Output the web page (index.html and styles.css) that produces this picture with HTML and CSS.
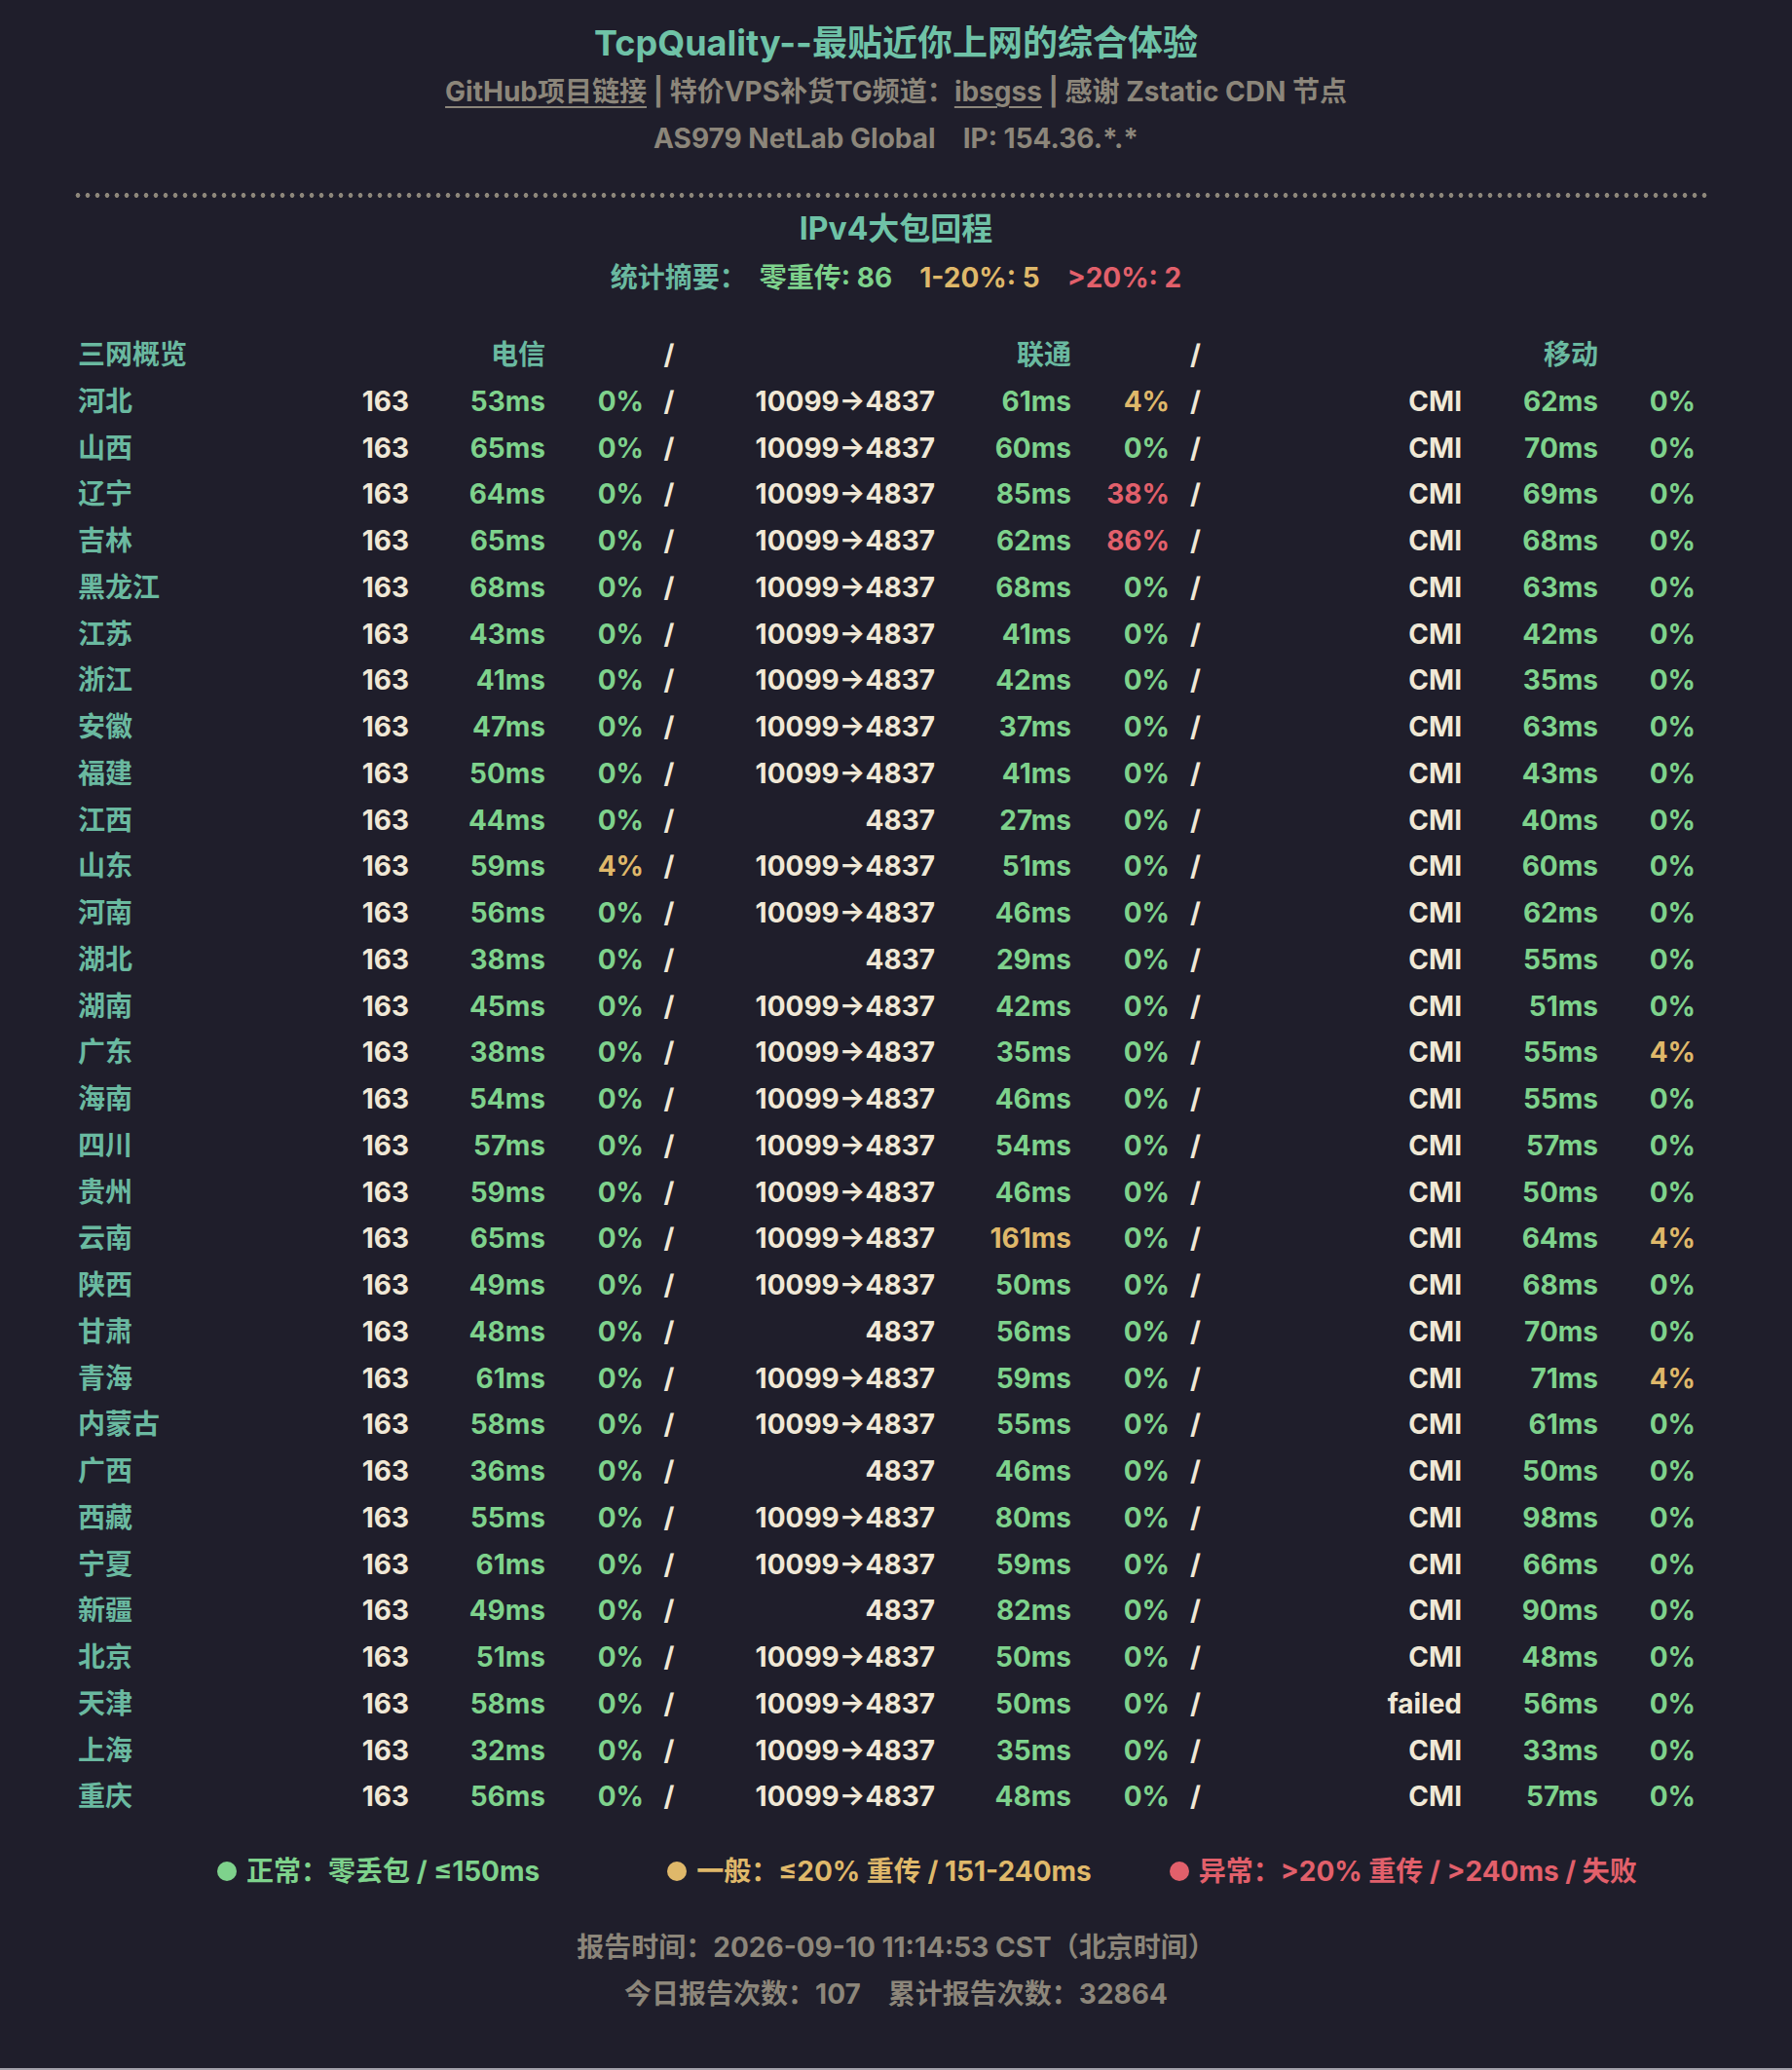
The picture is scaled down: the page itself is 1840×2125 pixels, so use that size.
FILE: index.html
```html
<!DOCTYPE html>
<html lang="zh-CN">
<head>
<meta charset="utf-8">
<title>TcpQuality</title>
<link rel="stylesheet" href="styles.css">
</head>
<body>
<div class="page">
  <header class="head">
    <h1 class="title">TcpQuality--最贴近你上网的综合体验</h1>
    <div class="links"><a class="link" href="#">GitHub项目链接</a> | 特价VPS补货TG频道：<a class="link" href="#">ibsgss</a> | 感谢 Zstatic CDN 节点</div>
    <div class="meta"><span>AS979 NetLab Global</span><span class="meta-ip">IP: 154.36.*.*</span></div>
  </header>

  <div class="divider"></div>

  <h2 class="section-title">IPv4大包回程</h2>
  <div class="stats">
    <span class="stat-label">统计摘要：</span>
    <span class="stat ok">零重传: 86</span>
    <span class="stat warn">1-20%: 5</span>
    <span class="stat bad">&gt;20%: 2</span>
  </div>

  <div class="grid">
    <div class="row head-row"><span class="name">三网概览</span><span></span><span class="r th">电信</span><span></span><span class="sep">/</span><span></span><span class="r th">联通</span><span></span><span class="sep">/</span><span></span><span class="r th">移动</span><span></span></div>

    <div class="row"><span class="name">河北</span><span class="r asn">163</span><span class="r ok">53ms</span><span class="r ok">0%</span><span class="sep">/</span><span class="r asn">10099→4837</span><span class="r ok">61ms</span><span class="r warn">4%</span><span class="sep">/</span><span class="r asn">CMI</span><span class="r ok">62ms</span><span class="r ok">0%</span></div>
    <div class="row"><span class="name">山西</span><span class="r asn">163</span><span class="r ok">65ms</span><span class="r ok">0%</span><span class="sep">/</span><span class="r asn">10099→4837</span><span class="r ok">60ms</span><span class="r ok">0%</span><span class="sep">/</span><span class="r asn">CMI</span><span class="r ok">70ms</span><span class="r ok">0%</span></div>
    <div class="row"><span class="name">辽宁</span><span class="r asn">163</span><span class="r ok">64ms</span><span class="r ok">0%</span><span class="sep">/</span><span class="r asn">10099→4837</span><span class="r ok">85ms</span><span class="r bad">38%</span><span class="sep">/</span><span class="r asn">CMI</span><span class="r ok">69ms</span><span class="r ok">0%</span></div>
    <div class="row"><span class="name">吉林</span><span class="r asn">163</span><span class="r ok">65ms</span><span class="r ok">0%</span><span class="sep">/</span><span class="r asn">10099→4837</span><span class="r ok">62ms</span><span class="r bad">86%</span><span class="sep">/</span><span class="r asn">CMI</span><span class="r ok">68ms</span><span class="r ok">0%</span></div>
    <div class="row"><span class="name">黑龙江</span><span class="r asn">163</span><span class="r ok">68ms</span><span class="r ok">0%</span><span class="sep">/</span><span class="r asn">10099→4837</span><span class="r ok">68ms</span><span class="r ok">0%</span><span class="sep">/</span><span class="r asn">CMI</span><span class="r ok">63ms</span><span class="r ok">0%</span></div>
    <div class="row"><span class="name">江苏</span><span class="r asn">163</span><span class="r ok">43ms</span><span class="r ok">0%</span><span class="sep">/</span><span class="r asn">10099→4837</span><span class="r ok">41ms</span><span class="r ok">0%</span><span class="sep">/</span><span class="r asn">CMI</span><span class="r ok">42ms</span><span class="r ok">0%</span></div>
    <div class="row"><span class="name">浙江</span><span class="r asn">163</span><span class="r ok">41ms</span><span class="r ok">0%</span><span class="sep">/</span><span class="r asn">10099→4837</span><span class="r ok">42ms</span><span class="r ok">0%</span><span class="sep">/</span><span class="r asn">CMI</span><span class="r ok">35ms</span><span class="r ok">0%</span></div>
    <div class="row"><span class="name">安徽</span><span class="r asn">163</span><span class="r ok">47ms</span><span class="r ok">0%</span><span class="sep">/</span><span class="r asn">10099→4837</span><span class="r ok">37ms</span><span class="r ok">0%</span><span class="sep">/</span><span class="r asn">CMI</span><span class="r ok">63ms</span><span class="r ok">0%</span></div>
    <div class="row"><span class="name">福建</span><span class="r asn">163</span><span class="r ok">50ms</span><span class="r ok">0%</span><span class="sep">/</span><span class="r asn">10099→4837</span><span class="r ok">41ms</span><span class="r ok">0%</span><span class="sep">/</span><span class="r asn">CMI</span><span class="r ok">43ms</span><span class="r ok">0%</span></div>
    <div class="row"><span class="name">江西</span><span class="r asn">163</span><span class="r ok">44ms</span><span class="r ok">0%</span><span class="sep">/</span><span class="r asn">4837</span><span class="r ok">27ms</span><span class="r ok">0%</span><span class="sep">/</span><span class="r asn">CMI</span><span class="r ok">40ms</span><span class="r ok">0%</span></div>
    <div class="row"><span class="name">山东</span><span class="r asn">163</span><span class="r ok">59ms</span><span class="r warn">4%</span><span class="sep">/</span><span class="r asn">10099→4837</span><span class="r ok">51ms</span><span class="r ok">0%</span><span class="sep">/</span><span class="r asn">CMI</span><span class="r ok">60ms</span><span class="r ok">0%</span></div>
    <div class="row"><span class="name">河南</span><span class="r asn">163</span><span class="r ok">56ms</span><span class="r ok">0%</span><span class="sep">/</span><span class="r asn">10099→4837</span><span class="r ok">46ms</span><span class="r ok">0%</span><span class="sep">/</span><span class="r asn">CMI</span><span class="r ok">62ms</span><span class="r ok">0%</span></div>
    <div class="row"><span class="name">湖北</span><span class="r asn">163</span><span class="r ok">38ms</span><span class="r ok">0%</span><span class="sep">/</span><span class="r asn">4837</span><span class="r ok">29ms</span><span class="r ok">0%</span><span class="sep">/</span><span class="r asn">CMI</span><span class="r ok">55ms</span><span class="r ok">0%</span></div>
    <div class="row"><span class="name">湖南</span><span class="r asn">163</span><span class="r ok">45ms</span><span class="r ok">0%</span><span class="sep">/</span><span class="r asn">10099→4837</span><span class="r ok">42ms</span><span class="r ok">0%</span><span class="sep">/</span><span class="r asn">CMI</span><span class="r ok">51ms</span><span class="r ok">0%</span></div>
    <div class="row"><span class="name">广东</span><span class="r asn">163</span><span class="r ok">38ms</span><span class="r ok">0%</span><span class="sep">/</span><span class="r asn">10099→4837</span><span class="r ok">35ms</span><span class="r ok">0%</span><span class="sep">/</span><span class="r asn">CMI</span><span class="r ok">55ms</span><span class="r warn">4%</span></div>
    <div class="row"><span class="name">海南</span><span class="r asn">163</span><span class="r ok">54ms</span><span class="r ok">0%</span><span class="sep">/</span><span class="r asn">10099→4837</span><span class="r ok">46ms</span><span class="r ok">0%</span><span class="sep">/</span><span class="r asn">CMI</span><span class="r ok">55ms</span><span class="r ok">0%</span></div>
    <div class="row"><span class="name">四川</span><span class="r asn">163</span><span class="r ok">57ms</span><span class="r ok">0%</span><span class="sep">/</span><span class="r asn">10099→4837</span><span class="r ok">54ms</span><span class="r ok">0%</span><span class="sep">/</span><span class="r asn">CMI</span><span class="r ok">57ms</span><span class="r ok">0%</span></div>
    <div class="row"><span class="name">贵州</span><span class="r asn">163</span><span class="r ok">59ms</span><span class="r ok">0%</span><span class="sep">/</span><span class="r asn">10099→4837</span><span class="r ok">46ms</span><span class="r ok">0%</span><span class="sep">/</span><span class="r asn">CMI</span><span class="r ok">50ms</span><span class="r ok">0%</span></div>
    <div class="row"><span class="name">云南</span><span class="r asn">163</span><span class="r ok">65ms</span><span class="r ok">0%</span><span class="sep">/</span><span class="r asn">10099→4837</span><span class="r warn">161ms</span><span class="r ok">0%</span><span class="sep">/</span><span class="r asn">CMI</span><span class="r ok">64ms</span><span class="r warn">4%</span></div>
    <div class="row"><span class="name">陕西</span><span class="r asn">163</span><span class="r ok">49ms</span><span class="r ok">0%</span><span class="sep">/</span><span class="r asn">10099→4837</span><span class="r ok">50ms</span><span class="r ok">0%</span><span class="sep">/</span><span class="r asn">CMI</span><span class="r ok">68ms</span><span class="r ok">0%</span></div>
    <div class="row"><span class="name">甘肃</span><span class="r asn">163</span><span class="r ok">48ms</span><span class="r ok">0%</span><span class="sep">/</span><span class="r asn">4837</span><span class="r ok">56ms</span><span class="r ok">0%</span><span class="sep">/</span><span class="r asn">CMI</span><span class="r ok">70ms</span><span class="r ok">0%</span></div>
    <div class="row"><span class="name">青海</span><span class="r asn">163</span><span class="r ok">61ms</span><span class="r ok">0%</span><span class="sep">/</span><span class="r asn">10099→4837</span><span class="r ok">59ms</span><span class="r ok">0%</span><span class="sep">/</span><span class="r asn">CMI</span><span class="r ok">71ms</span><span class="r warn">4%</span></div>
    <div class="row"><span class="name">内蒙古</span><span class="r asn">163</span><span class="r ok">58ms</span><span class="r ok">0%</span><span class="sep">/</span><span class="r asn">10099→4837</span><span class="r ok">55ms</span><span class="r ok">0%</span><span class="sep">/</span><span class="r asn">CMI</span><span class="r ok">61ms</span><span class="r ok">0%</span></div>
    <div class="row"><span class="name">广西</span><span class="r asn">163</span><span class="r ok">36ms</span><span class="r ok">0%</span><span class="sep">/</span><span class="r asn">4837</span><span class="r ok">46ms</span><span class="r ok">0%</span><span class="sep">/</span><span class="r asn">CMI</span><span class="r ok">50ms</span><span class="r ok">0%</span></div>
    <div class="row"><span class="name">西藏</span><span class="r asn">163</span><span class="r ok">55ms</span><span class="r ok">0%</span><span class="sep">/</span><span class="r asn">10099→4837</span><span class="r ok">80ms</span><span class="r ok">0%</span><span class="sep">/</span><span class="r asn">CMI</span><span class="r ok">98ms</span><span class="r ok">0%</span></div>
    <div class="row"><span class="name">宁夏</span><span class="r asn">163</span><span class="r ok">61ms</span><span class="r ok">0%</span><span class="sep">/</span><span class="r asn">10099→4837</span><span class="r ok">59ms</span><span class="r ok">0%</span><span class="sep">/</span><span class="r asn">CMI</span><span class="r ok">66ms</span><span class="r ok">0%</span></div>
    <div class="row"><span class="name">新疆</span><span class="r asn">163</span><span class="r ok">49ms</span><span class="r ok">0%</span><span class="sep">/</span><span class="r asn">4837</span><span class="r ok">82ms</span><span class="r ok">0%</span><span class="sep">/</span><span class="r asn">CMI</span><span class="r ok">90ms</span><span class="r ok">0%</span></div>
    <div class="row"><span class="name">北京</span><span class="r asn">163</span><span class="r ok">51ms</span><span class="r ok">0%</span><span class="sep">/</span><span class="r asn">10099→4837</span><span class="r ok">50ms</span><span class="r ok">0%</span><span class="sep">/</span><span class="r asn">CMI</span><span class="r ok">48ms</span><span class="r ok">0%</span></div>
    <div class="row"><span class="name">天津</span><span class="r asn">163</span><span class="r ok">58ms</span><span class="r ok">0%</span><span class="sep">/</span><span class="r asn">10099→4837</span><span class="r ok">50ms</span><span class="r ok">0%</span><span class="sep">/</span><span class="r asn">failed</span><span class="r ok">56ms</span><span class="r ok">0%</span></div>
    <div class="row"><span class="name">上海</span><span class="r asn">163</span><span class="r ok">32ms</span><span class="r ok">0%</span><span class="sep">/</span><span class="r asn">10099→4837</span><span class="r ok">35ms</span><span class="r ok">0%</span><span class="sep">/</span><span class="r asn">CMI</span><span class="r ok">33ms</span><span class="r ok">0%</span></div>
    <div class="row"><span class="name">重庆</span><span class="r asn">163</span><span class="r ok">56ms</span><span class="r ok">0%</span><span class="sep">/</span><span class="r asn">10099→4837</span><span class="r ok">48ms</span><span class="r ok">0%</span><span class="sep">/</span><span class="r asn">CMI</span><span class="r ok">57ms</span><span class="r ok">0%</span></div>
  </div>

  <div class="legend">
    <span class="legend-item legend-ok"><span class="dot"></span>正常：零丢包 / ≤150ms</span>
    <span class="legend-item legend-warn"><span class="dot"></span>一般：≤20% 重传 / 151-240ms</span>
    <span class="legend-item legend-bad"><span class="dot"></span>异常：&gt;20% 重传 / &gt;240ms / 失败</span>
  </div>

  <footer class="foot">
    <div class="foot-line">报告时间：2026-09-10 11:14:53 CST（北京时间）</div>
    <div class="foot-line"><span>今日报告次数：107</span><span class="foot-total">累计报告次数：32864</span></div>
  </footer>
</div>
</body>
</html>
```

FILE: styles.css
```css
html, body {
  margin: 0;
  padding: 0;
  background: #1f1e2b;
}

body {
  font-family: "Inter", "Noto Sans CJK SC", sans-serif;
  font-weight: 700;
  color: #f0e8d6;
}

.page {
  padding: 18px 80px 52px;
  border-bottom: 2px solid #a2a1aa;
}

.head {
  text-align: center;
}

.title {
  margin: 0;
  font-size: 36px;
  line-height: 52px;
  font-weight: 700;
  color: #6fc2a7;
}

.links,
.meta {
  font-size: 28px;
  line-height: 48px;
  color: #8c867a;
}

.link {
  color: #8c867a;
  text-decoration: underline;
  text-decoration-thickness: 2px;
  text-underline-offset: 5px;
}

.meta-ip {
  margin-left: 28px;
}

.divider {
  margin: 32px 3px 0 -5px;
  height: 5px;
  background-image: radial-gradient(circle at center, #8c867a 2.1px, transparent 2.7px);
  background-size: 10px 5px;
  background-repeat: repeat-x;
}

.section-title {
  margin: 10px 0 0;
  font-size: 32px;
  line-height: 44px;
  font-weight: 700;
  text-align: center;
  color: #6fc2a7;
}

.stats {
  margin-top: 4px;
  display: flex;
  justify-content: center;
  font-size: 28px;
  line-height: 48px;
}

.stat-label {
  color: #6ab9a0;
  margin-right: 13px;
}

.stat + .stat {
  margin-left: 28px;
}

.grid {
  margin-top: 32px;
  font-size: 28px;
}

.row {
  display: grid;
  grid-template-columns: 180px 160px 140px 101px 52px 247px 140px 101px 53px 247px 140px 100px;
  line-height: 47.75px;
  white-space: nowrap;
}

.name {
  color: #6ab9a0;
}

.th {
  color: #6ab9a0;
}

.r {
  text-align: right;
}

.sep {
  text-align: center;
  color: #f0e8d6;
}

.asn {
  color: #f0e8d6;
}

.ok {
  color: #7ed28c;
}

.warn {
  color: #dfb86a;
}

.bad {
  color: #e2606b;
}

.legend {
  margin-top: 28px;
  display: flex;
  padding-left: 143px;
  font-size: 28px;
  line-height: 48px;
}

.legend-item {
  display: flex;
  align-items: center;
  white-space: nowrap;
}

.dot {
  width: 20px;
  height: 20px;
  border-radius: 50%;
  margin-right: 10px;
  background: currentColor;
}

.legend-ok {
  color: #7ed28c;
  margin-right: 131px;
}

.legend-warn {
  color: #dfb86a;
  margin-right: 80px;
}

.legend-bad {
  color: #e2606b;
}

.foot {
  margin-top: 31px;
  text-align: center;
  font-size: 28px;
  line-height: 47.5px;
  color: #8c867a;
}

.foot-total {
  margin-left: 28px;
}
```
